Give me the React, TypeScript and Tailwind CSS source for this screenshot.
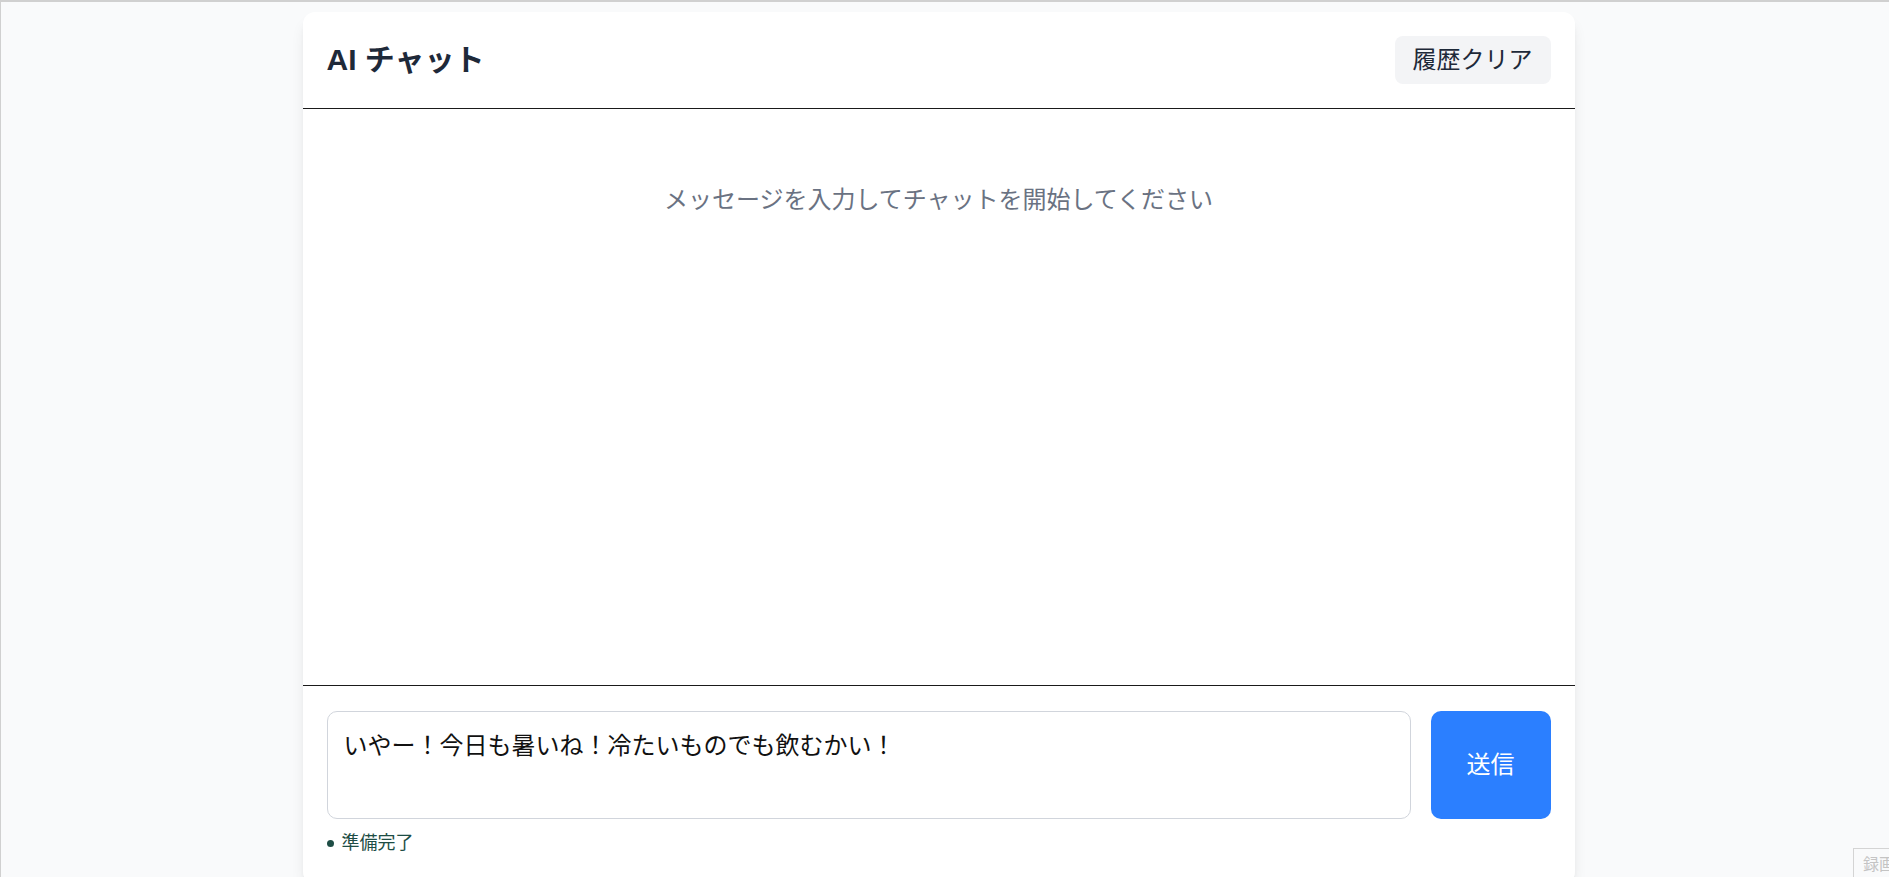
import React, { useState } from "react";

export default function App() {
  const [text, setText] = useState("いやー！今日も暑いね！冷たいものでも飲むかい！");
  const font = "font-['Liberation_Sans','Noto_Sans_CJK_JP',sans-serif]";
  return (
    <div
      className={`h-screen overflow-hidden bg-[#f9fafb] border-t-2 border-l border-[#d0d0d0] flex justify-center pt-[10px] pr-[13px] ${font}`}
    >
      <div className="w-[1272px] h-[872px] shrink-0 bg-white rounded-xl shadow-lg flex flex-col text-[#111]">
        <div className="flex items-center justify-between px-6 py-6 border-b border-[#1a1a1a]">
          <h1 className="text-[30px] leading-9 font-bold text-[#1e2939]">AI チャット</h1>
          <button className="h-12 px-[18px] rounded-lg bg-[#f3f4f6] text-[24px] leading-8 text-[#1e2939]">
            履歴クリア
          </button>
        </div>
        <div className="h-[576px] shrink-0 p-6">
          <p className="mt-[51px] text-center text-[24px] leading-8 text-[#6a7282]">
            メッセージを入力してチャットを開始してください
          </p>
        </div>
        <div className="border-t border-[#1a1a1a] px-6 pt-[25px] pb-[22px]">
          <div className="flex gap-5">
            <textarea
              value={text}
              onChange={(e) => setText(e.target.value)}
              className={`flex-1 h-[108px] resize-none rounded-[10px] border border-[#d1d5dc] p-4 text-[24px] leading-9 text-[#111] outline-none ${font}`}
            />
            <button className="w-[120px] h-[108px] rounded-[10px] bg-[#2b7fff] text-white text-[24px]">
              送信
            </button>
          </div>
          <div className="mt-[11px] flex items-center gap-2 text-[18px] leading-[27px] text-[#1e4d45]">
            <span className="w-[7px] h-[7px] rounded-full bg-[#1e4d45]" />
            <span>準備完了</span>
          </div>
        </div>
      </div>
      <div className="fixed left-[1853px] top-[848px] border border-[#d4d4d4] bg-[#f9fafb] px-[9px] py-[6px] text-[16px] leading-5 text-[#c4c4c4] whitespace-nowrap">
        録画
      </div>
    </div>
  );
}
